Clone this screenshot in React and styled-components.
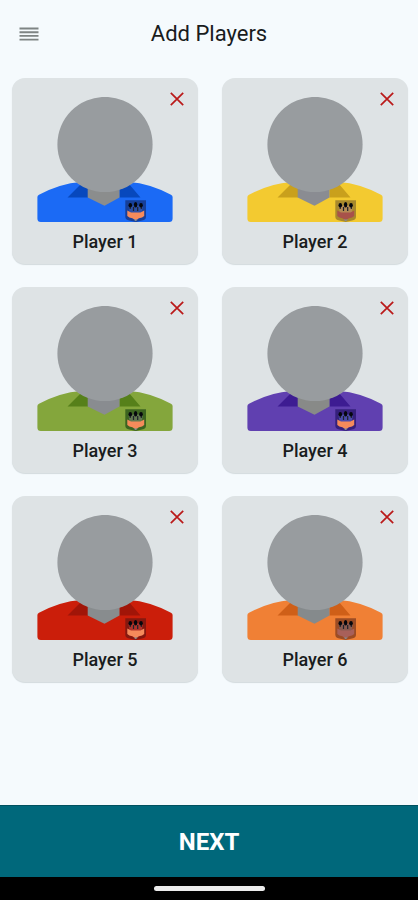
import React from "react";
import styled, { createGlobalStyle } from "styled-components";

const GlobalStyle = createGlobalStyle`
  * { box-sizing: border-box; }
  body { margin: 0; background: #f5fafd; }
`;

const Screen = styled.div`
  min-height: 100vh;
  display: flex;
  flex-direction: column;
  background: #f5fafd;
  color: #191c1d;
  font-family: Roboto, sans-serif;
`;

const Header = styled.header`
  display: grid;
  grid-template-columns: 48px 1fr 48px;
  align-items: center;
  height: 68px;
  padding: 0 5px;
`;

const IconButton = styled.button`
  display: flex;
  align-items: center;
  justify-content: center;
  width: ${(p) => p.$size}px;
  height: ${(p) => p.$size}px;
  padding: 0;
  border: 0;
  background: none;
  color: ${(p) => p.$color};
  cursor: pointer;
`;

const Title = styled.h1`
  margin: 0;
  font-size: 22px;
  font-weight: 400;
  line-height: 28px;
  text-align: center;
`;

const Players = styled.main`
  flex: 1;
  display: grid;
  grid-template-columns: 1fr 1fr;
  align-content: start;
  gap: 23px 24px;
  padding: 10px 10px 24px 12px;
`;

const Card = styled.article`
  position: relative;
  display: flex;
  flex-direction: column;
  align-items: center;
  padding: 19px 16px 10px;
  border-radius: 13px;
  background: #dee3e5;
  box-shadow: 0 1px 1px #d3dadd;
`;

const RemoveSlot = styled.div`
  position: absolute;
  top: 6px;
  right: 6px;
`;

const Name = styled.h2`
  margin: 8px 0 0;
  font-size: 18px;
  font-weight: 500;
  line-height: 24px;
`;

const NextButton = styled.button`
  height: 72px;
  border: 0;
  border-top: 1px solid #00505f;
  background: #00687b;
  color: #fff;
  font: 700 24px/28px Roboto, sans-serif;
  cursor: pointer;
`;

const SystemBar = styled.footer`
  display: flex;
  justify-content: center;
  align-items: center;
  height: 23px;
  background: #000;
`;

const Handle = styled.div`
  width: 111px;
  height: 5px;
  border-radius: 3px;
  background: #ececec;
`;

const players = [
  { name: "Player 1", shirt: "#1b6af5", collar: "#0748bd", crest: "#163f99", neck: "#8b8d8d", face: "#2c4fa5", mouth: "#f58b5b" },
  { name: "Player 2", shirt: "#f3ca30", collar: "#c9a01c", crest: "#a8892c", neck: "#8a8c92", face: "#b58b55", mouth: "#a8524a" },
  { name: "Player 3", shirt: "#84a63c", collar: "#56801a", crest: "#3c6420", neck: "#898c90", face: "#617850", mouth: "#f58b5b" },
  { name: "Player 4", shirt: "#6040b0", collar: "#3d1c92", crest: "#35207c", neck: "#888a88", face: "#4a4baa", mouth: "#f58b5b" },
  { name: "Player 5", shirt: "#cb1e0a", collar: "#a11508", crest: "#86180f", neck: "#888c8e", face: "#b0332b", mouth: "#f58b5b" },
  { name: "Player 6", shirt: "#f08035", collar: "#cf5f18", crest: "#9c4c24", neck: "#858a8c", face: "#8a5a50", mouth: "#a8605a" },
];

function MenuIcon() {
  return (
    <svg width="20" height="16" viewBox="0 0 20 16" aria-hidden="true">
      <path d="M.5 2.5h19M.5 6.2h19M.5 9.9h19M.5 13.6h19" stroke="#7e8484" strokeWidth="1.9" />
    </svg>
  );
}

function CloseIcon() {
  return (
    <svg width="14" height="14" viewBox="0 0 14 14" aria-hidden="true">
      <path d="M.8.8l12.4 12.4M13.2.8L.8 13.2" stroke="currentColor" strokeWidth="1.7" />
    </svg>
  );
}

function Avatar({ p }) {
  return (
    <svg width="136" height="125" viewBox="0 0 136 125" aria-hidden="true">
      <path d="M.4 100Q.4 98.6 2 97.8Q23 86.500 44 85H92Q113 86.500 134 97.800Q135.600 98.600 135.600 100V121.500Q135.600 125 132.200 125H3.800Q.4 125 .4 121.500Z" fill={p.shirt} />
      <path d="M30.500 100.400L44 87L51 91V100.400ZM82.500 91L92 87L103.500 100.400H82.500Z" fill={p.collar} />
      <path d="M50.700 88H82.500V100.400L67.500 108.800L50.700 100.400Z" fill={p.neck} />
      <circle cx="68" cy="47.500" r="47.600" fill="#989c9f" />
      <path d="M88.300 103.300H109V119.500Q109 122.600 106 123.300L98.700 125L91.300 123.300Q88.300 122.600 88.300 119.500Z" fill={p.crest} />
      <path d="M91.500 109.500Q98.500 107 105.800 109.500L104.500 117.500H93Z" fill={p.face} />
      <path d="M90.300 113.500L94 115.500H103.500L107.200 113.500V119Q105.500 121 102 121.300L98.700 123.200L95.300 121.300Q92 121 90.300 119Z" fill={p.mouth} />
      <path d="M93.200 112V109.500M96.500 114V110M100.700 114V110M104.300 112V109.500" stroke="#20232b" strokeWidth="1.2" />
      <ellipse cx="93.300" cy="108.300" rx="1.800" ry="2.200" fill="#05070d" />
      <ellipse cx="98.600" cy="107.700" rx="1.700" ry="2.700" fill="#05070d" />
      <ellipse cx="104" cy="108.300" rx="1.800" ry="2.200" fill="#05070d" />
      <path d="M96.500 122.500h4.500l-2.300 1.700z" fill="#858d94" />
    </svg>
  );
}

export default function App() {
  return (
    <>
      <GlobalStyle />
      <Screen>
        <Header>
          <IconButton type="button" aria-label="Menu" $size={48} $color="#7e8484">
            <MenuIcon />
          </IconButton>
          <Title>Add Players</Title>
        </Header>
        <Players>
          {players.map((p) => (
            <Card key={p.name}>
              <Avatar p={p} />
              <Name>{p.name}</Name>
              <RemoveSlot>
                <IconButton type="button" aria-label={`Remove ${p.name}`} $size={30} $color="#ba1a1a">
                  <CloseIcon />
                </IconButton>
              </RemoveSlot>
            </Card>
          ))}
        </Players>
        <NextButton type="button">NEXT</NextButton>
        <SystemBar>
          <Handle />
        </SystemBar>
      </Screen>
    </>
  );
}
